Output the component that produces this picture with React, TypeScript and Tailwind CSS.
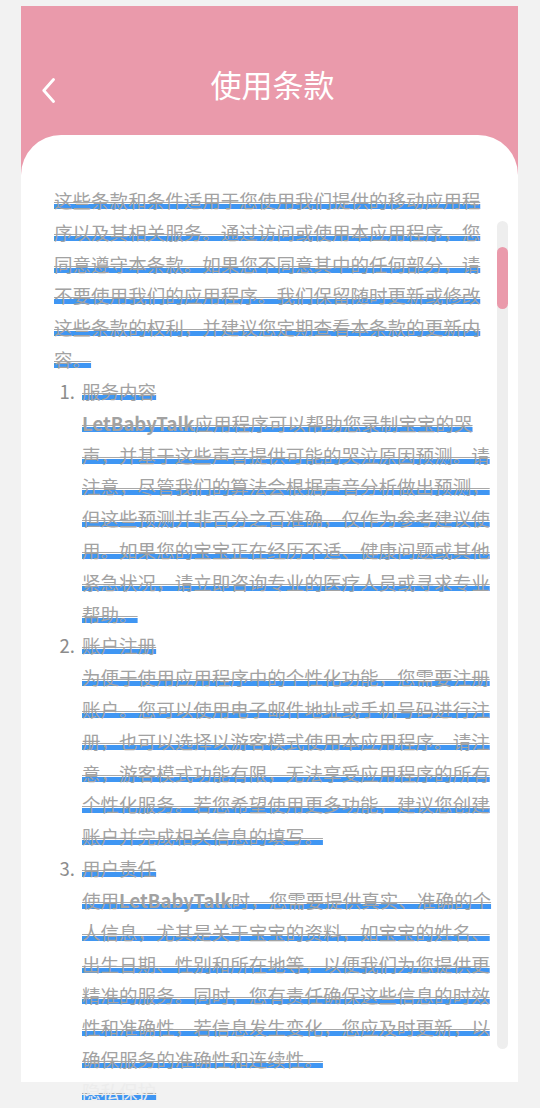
import React from 'react';

// blue bar + thin grey underline drawn with two nested text decorations
const bar =
  "underline decoration-[#3f96f3] decoration-[4.5px] underline-offset-[-4px] [text-decoration-skip-ink:none]";
const thin =
  "underline decoration-[#a8a8a8] decoration-1 underline-offset-[-6px] [text-decoration-skip-ink:none]";

function Mark({ children }: { children: React.ReactNode }) {
  return (
    <span className={bar}>
      <span className={thin}>{children}</span>
    </span>
  );
}

type Item = {
  no: string;
  title: string;
  body: React.ReactNode;
  faded?: boolean;
};

const items: Item[] = [
  {
    no: '1.',
    title: '服务内容',
    body: (
      <>
        <b className="font-bold">LetBabyTalk</b>
        应用程序可以帮助您录制宝宝的哭声，并基于这些声音提供可能的哭泣原因预测。请注意，尽管我们的算法会根据声音分析做出预测，但这些预测并非百分之百准确，仅作为参考建议使用。如果您的宝宝正在经历不适、健康问题或其他紧急状况，请立即咨询专业的医疗人员或寻求专业帮助。
      </>
    ),
  },
  {
    no: '2.',
    title: '账户注册',
    body: '为便于使用应用程序中的个性化功能，您需要注册账户。您可以使用电子邮件地址或手机号码进行注册，也可以选择以游客模式使用本应用程序。请注意，游客模式功能有限，无法享受应用程序的所有个性化服务。若您希望使用更多功能，建议您创建账户并完成相关信息的填写。',
  },
  {
    no: '3.',
    title: '用户责任',
    body: (
      <>
        使用<b className="font-bold">LetBabyTalk</b>
        时，您需要提供真实、准确的个人信息，尤其是关于宝宝的资料，如宝宝的姓名、出生日期、性别和所在地等，以便我们为您提供更精准的服务。同时，您有责任确保这些信息的时效性和准确性，若信息发生变化，您应及时更新，以确保服务的准确性和连续性。
      </>
    ),
  },
  { no: '4.', title: '隐私保护', body: null, faded: true },
];

export default function App() {
  return (
    <div className="min-h-screen bg-[#f2f2f2] pt-[6px] pl-[21px] font-['Noto_Sans_CJK_SC','Noto_Sans',sans-serif]">
      <div className="w-[497px] h-[1076px] bg-[#ea9aab] flex flex-col">
        {/* header */}
        <header className="h-[129px] shrink-0 flex items-start pt-[62px] pl-[21px]">
          <svg width="13" height="25" viewBox="0 0 13 25" className="mt-[10px] shrink-0">
            <polyline points="11.5,1.5 1.8,12.5 11.5,23.5" fill="none" stroke="#fff" strokeWidth="2.8" strokeLinecap="round" strokeLinejoin="round" />
          </svg>
          <h1 className="flex-1 text-center text-white text-[31px] leading-[31px] font-normal pl-[6px]">使用条款</h1>
          <div className="w-[34px] shrink-0" />
        </header>

        {/* card */}
        <main className="flex-1 min-h-0 bg-white rounded-t-[40px] flex pl-[33px] pr-[10px]">
          <div className="w-[441px] shrink-0 pt-[49px] text-[18.55px] leading-[31.82px] text-[#a2a2a2]">
            <p>
              <Mark>
                这些条款和条件适用于您使用我们提供的移动应用程序以及其相关服务。通过访问或使用本应用程序，您同意遵守本条款。如果您不同意其中的任何部分，请不要使用我们的应用程序。我们保留随时更新或修改这些条款的权利，并建议您定期查看本条款的更新内容。
              </Mark>
            </p>
            <ol>
              {items.map((it) => (
                <li key={it.no} className="flex">
                  <span
                    className={
                      it.faded
                        ? 'w-[28px] shrink-0 text-right pr-[7px] text-transparent'
                        : 'w-[28px] shrink-0 text-right pr-[7px] text-[#8c8c8c]'
                    }
                  >
                    {it.no}
                  </span>
                  <div className={it.faded ? 'text-[#ececec]' : ''}>
                    <Mark>{it.title}</Mark>
                    {it.body && (
                      <>
                        <br />
                        <Mark>{it.body}</Mark>
                      </>
                    )}
                  </div>
                </li>
              ))}
            </ol>
          </div>

          {/* scrollbar */}
          <div className="ml-[2px] mt-[86px] w-[11px] h-[828px] shrink-0 bg-[#eeeeee] rounded-full pt-[26px]">
            <div className="h-[62px] bg-[#ea9aab] rounded-full" />
          </div>
        </main>
      </div>
    </div>
  );
}
